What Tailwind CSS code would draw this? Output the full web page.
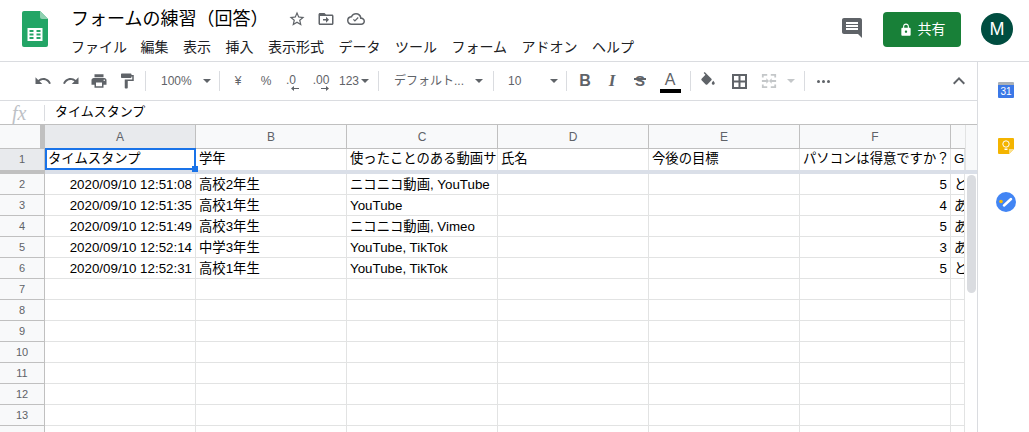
<!DOCTYPE html>
<html lang="ja">
<head>
    <meta charset="UTF-8">
    <title>フォームの練習（回答）</title>
    <script src="https://cdn.jsdelivr.net/npm/@tailwindcss/browser@4"></script>
</head>
<body class="h-screen overflow-hidden bg-white text-black font-['Liberation_Sans','Noto_Sans_CJK_JP',sans-serif]">

    <!-- Title bar -->
    <header class="flex h-[62px] border-b border-[#dadce0]">
        <svg class="ml-[22px] mt-[11px] w-[26px] h-[36px]" viewBox="0 0 26 36">
            <path d="M2 0h16l8 8v26a2 2 0 0 1-2 2H2a2 2 0 0 1-2-2V2a2 2 0 0 1 2-2z" fill="#23a566"/>
            <path d="M18 0l8 8h-6a2 2 0 0 1-2-2z" fill="#8ed1b1"/>
            <path d="M5.500 17h15v13h-15z M7.500 19v2h4v-2z M14.500 19v2h4v-2z M7.500 22.500v2h4v-2z M14.500 22.500v2h4v-2z M7.500 26v2h4v-2z M14.500 26v2h4v-2z" fill="#fff" fill-rule="evenodd"/>
        </svg>
        <div class="ml-[23px] flex flex-col">
            <div class="flex items-center h-[24px] mt-[7px]">
                <span class="text-[18px] leading-[24px] w-[217px] whitespace-nowrap">フォームの練習（回答）</span>
                <svg class="w-[18px] h-[18px]" viewBox="0 0 24 24" fill="#5f6368"><path d="M22 9.240l-7.190-.620L12 2 9.190 8.630 2 9.240l5.460 4.730L5.820 21 12 17.270 18.180 21l-1.630-7.030L22 9.240zM12 15.400l-3.760 2.270 1-4.280-3.320-2.880 4.380-.380L12 6.100l1.710 4.040 4.380.380-3.320 2.880 1 4.280L12 15.400z"/></svg>
                <svg class="ml-[11px] w-[18px] h-[18px]" viewBox="0 0 24 24" fill="#5f6368"><path d="M20 6h-8l-2-2H4c-1.100 0-2 .9-2 2v12c0 1.100.9 2 2 2h16c1.100 0 2-.9 2-2V8c0-1.100-.9-2-2-2zm0 12H4V8h16v10zm-8-1l4-4-4-4v3H8v2h4v3z"/></svg>
                <svg class="ml-[12px] w-[18px] h-[18px]" viewBox="0 0 24 24" fill="#5f6368"><path d="M19.350 10.040A7.490 7.490 0 0 0 12 4C9.110 4 6.600 5.640 5.350 8.040A5.994 5.994 0 0 0 0 14c0 3.310 2.690 6 6 6h13c2.760 0 5-2.240 5-5 0-2.640-2.050-4.780-4.650-4.960zM19 18H6c-2.210 0-4-1.790-4-4s1.790-4 4-4h.710C7.370 7.690 9.480 6 12 6c3.040 0 5.500 2.460 5.500 5.500v.5H19c1.660 0 3 1.340 3 3s-1.340 3-3 3zm-8.500-2.500L8 13l1.100-1.100 1.400 1.400 3.900-3.900 1.100 1.100-5 5z"/></svg>
            </div>
            <nav class="flex gap-[14.500px] mt-[4px] text-[14px] leading-[24px] text-[#202124] whitespace-nowrap">
                <span class="-mr-[1px]">ファイル</span><span>編集</span><span>表示</span><span>挿入</span><span>表示形式</span><span>データ</span><span>ツール</span><span>フォーム</span><span>アドオン</span><span>ヘルプ</span>
            </nav>
        </div>
        <div class="ml-auto flex items-start">
            <svg class="mt-[16px] w-[24px] h-[24px]" viewBox="0 0 24 24" fill="#5f6368"><path d="M21.990 4c0-1.100-.89-2-1.990-2H4c-1.100 0-2 .9-2 2v12c0 1.100.9 2 2 2h14l4 4-.01-18zM18 14H6v-2h12v2zm0-3H6V9h12v2zm0-3H6V6h12v2z"/></svg>
            <button class="ml-[19px] mt-[12px] flex items-center justify-center gap-[5px] w-[78px] h-[35px] rounded-[4px] bg-[#188038] text-white text-[14px]">
                <svg class="w-[14px] h-[14px]" viewBox="0 0 24 24" fill="#fff"><path d="M18 8h-1V6c0-2.760-2.240-5-5-5S7 3.240 7 6v2H6c-1.100 0-2 .9-2 2v10c0 1.100.9 2 2 2h12c1.100 0 2-.9 2-2V10c0-1.100-.9-2-2-2zm-6 9c-1.100 0-2-.9-2-2s.9-2 2-2 2 .9 2 2-.9 2-2 2zm3.100-9H8.900V6c0-1.710 1.390-3.100 3.100-3.100 1.710 0 3.100 1.390 3.100 3.100v2z"/></svg>
                共有
            </button>
            <div class="ml-[20px] mr-[16px] mt-[13px] w-[32px] h-[32px] rounded-full bg-[#004d40] text-white text-[18px] flex items-center justify-center">M</div>
        </div>
    </header>

    <div class="flex h-[370px]">
        <main class="w-[977px] flex flex-col border-r border-[#dadce0] box-content">

            <!-- Toolbar -->
            <div class="flex items-center h-[38px] pl-[29px] border-b border-[#dadce0] box-content text-[#5f6368] text-[12px] whitespace-nowrap">
                <span class="w-[28px] flex justify-center"><svg class="w-[18px] h-[18px]" viewBox="0 0 24 24" fill="#5f6368"><path d="M12.500 8c-2.650 0-5.050.99-6.900 2.600L2 7v9h9l-3.620-3.620c1.390-1.160 3.160-1.880 5.120-1.880 3.540 0 6.550 2.310 7.600 5.500l2.370-.78C21.080 11.030 17.150 8 12.500 8z"/></svg></span>
                <span class="w-[28px] flex justify-center"><svg class="w-[18px] h-[18px]" viewBox="0 0 24 24" fill="#5f6368"><path d="M18.400 10.600C16.550 8.990 14.150 8 11.500 8c-4.650 0-8.580 3.030-9.960 7.220L3.900 16c1.050-3.190 4.050-5.500 7.600-5.500 1.950 0 3.730.72 5.120 1.880L13 16h9V7l-3.600 3.600z"/></svg></span>
                <span class="w-[28px] flex justify-center"><svg class="w-[18px] h-[18px]" viewBox="0 0 24 24" fill="#5f6368"><path d="M19 8H5c-1.660 0-3 1.340-3 3v6h4v4h12v-4h4v-6c0-1.660-1.340-3-3-3zm-3 11H8v-5h8v5zm3-7c-.55 0-1-.45-1-1s.45-1 1-1 1 .45 1 1-.45 1-1 1zm-1-9H6v4h12V3z"/></svg></span>
                <span class="w-[28px] flex justify-center"><svg class="w-[18px] h-[18px]" viewBox="0 0 24 24" fill="#5f6368"><path d="M18 4V3c0-.55-.45-1-1-1H5c-.55 0-1 .45-1 1v4c0 .55.45 1 1 1h12c.55 0 1-.45 1-1V6h1v4H9v11c0 .55.45 1 1 1h2c.55 0 1-.45 1-1v-9h8V4h-3z"/></svg></span>
                <span class="ml-[4px] w-px h-[20px] bg-[#dadce0]"></span>
                <span class="w-[54px] pl-[15px]">100%</span>
                <span class="w-[14px] flex justify-center"><span class="border-x-[4px] border-t-[4px] border-x-transparent border-t-[#5f6368]"></span></span>
                <span class="ml-[5px] w-px h-[20px] bg-[#dadce0]"></span>
                <span class="w-[36px] text-center">¥</span>
                <span class="w-[20px] text-center">%</span>
                <span class="w-[30px] flex flex-col items-center leading-[12px] pt-[3px]">.0<svg class="ml-[8px] w-[8px] h-[5px]" viewBox="0 0 8 5" fill="#5f6368"><path d="M0 2.500L3 0v2h5v1H3v2z"/></svg></span>
                <span class="w-[30px] flex flex-col items-center leading-[12px] pt-[3px]">.00<svg class="ml-[8px] w-[8px] h-[5px]" viewBox="0 0 8 5" fill="#5f6368"><path d="M8 2.500L5 0v2H0v1h5v2z"/></svg></span>
                <span class="w-[25px] pl-[3px]">123</span>
                <span class="w-[8px] flex justify-center"><span class="border-x-[4px] border-t-[4px] border-x-transparent border-t-[#5f6368]"></span></span>
                <span class="ml-[9px] w-px h-[20px] bg-[#dadce0]"></span>
                <span class="w-[93px] pl-[15px]">デフォルト...</span>
                <span class="w-[14px] flex justify-center"><span class="border-x-[4px] border-t-[4px] border-x-transparent border-t-[#5f6368]"></span></span>
                <span class="ml-[7px] w-px h-[20px] bg-[#dadce0]"></span>
                <span class="w-[53px] pl-[14px]">10</span>
                <span class="w-[14px] flex justify-center"><span class="border-x-[4px] border-t-[4px] border-x-transparent border-t-[#5f6368]"></span></span>
                <span class="ml-[5px] w-px h-[20px] bg-[#dadce0]"></span>
                <span class="w-[36px] text-center text-[16px] font-bold">B</span>
                <span class="w-[18px] text-center text-[17px] font-bold italic font-['Liberation_Serif',serif]">I</span>
                <span class="relative w-[38px] text-center text-[15px] font-bold">S<span class="absolute left-[13px] top-[8px] w-[12px] h-[2px] bg-[#5f6368]"></span></span>
                <span class="w-[22px] flex flex-col items-center text-[16px] leading-[17px] pt-[2px]">A<span class="mt-[1px] w-[21px] h-[4px] bg-black"></span></span>
                <span class="ml-[9px] w-px h-[20px] bg-[#dadce0]"></span>
                <span class="w-[34px] flex justify-center"><svg class="w-[18px] h-[18px]" viewBox="0 0 24 24" fill="#5f6368"><path d="M16.560 8.940L7.620 0 6.210 1.410l2.380 2.380-5.150 5.150c-.59.59-.59 1.540 0 2.120l5.500 5.500c.29.29.68.44 1.060.44s.77-.15 1.060-.44l5.500-5.500c.59-.58.59-1.530 0-2.120zM19 11.500s-2 2.170-2 3.500c0 1.100.9 2 2 2s2-.9 2-2c0-1.330-2-3.500-2-3.500z"/></svg></span>
                <span class="w-[28px] flex justify-center"><svg class="w-[15px] h-[15px]" viewBox="0 0 15 15" fill="#5f6368"><path d="M0 0h15v15H0z M2 2v4.500h4.500V2z M8.500 2v4.500H13V2z M2 8.500V13h4.500V8.500z M8.500 8.500V13H13V8.500z" fill-rule="evenodd"/></svg></span>
                <span class="w-[32px] flex justify-center"><svg class="w-[16px] h-[16px]" viewBox="0 0 18 18" fill="#c4c7c9"><path d="M1 1h6v2H3v2H1z M11 1h6v4h-2V3h-4z M1 13h2v2h4v2H1z M15 13h2v4h-6v-2h4z M1 8h5V6l3 3-3 3v-2H1z M17 8h-5V6L9 9l3 3v-2h5z"/></svg></span>
                <span class="w-[12px] flex justify-center"><span class="border-x-[4px] border-t-[4px] border-x-transparent border-t-[#c4c7c9]"></span></span>
                <span class="ml-[7px] w-px h-[20px] bg-[#dadce0]"></span>
                <span class="w-[36px] flex justify-center gap-[2px]"><i class="w-[3px] h-[3px] rounded-full bg-[#5f6368]"></i><i class="w-[3px] h-[3px] rounded-full bg-[#5f6368]"></i><i class="w-[3px] h-[3px] rounded-full bg-[#5f6368]"></i></span>
                <span class="ml-auto mr-[4px] w-[28px] flex justify-center"><svg class="w-[24px] h-[24px]" viewBox="0 0 24 24" fill="#5f6368"><path d="M12 8l-6 6 1.410 1.410L12 10.830l4.590 4.580L18 14z"/></svg></span>
            </div>

            <!-- Formula bar -->
            <div class="flex items-center h-[23px] border-b border-[#c0c0c0] box-content">
                <span class="w-[44px] pl-[12px] font-['Liberation_Serif',serif] italic text-[20px] leading-[20px] text-[#bdc1c6]">fx</span>
                <span class="w-px h-[16px] bg-[#dadce0]"></span>
                <span class="ml-[10px] pb-[2px] text-[13px]">タイムスタンプ</span>
            </div>

            <!-- Sheet grid -->
            <div class="flex flex-1 min-h-0 overflow-hidden">
                <div class="relative w-[965px] text-[13.330px] whitespace-nowrap">
                    <div class="flex h-[24px] text-[12px] text-[#5f6368] bg-[#f8f9fa]">
                        <div class="relative w-[45px] border-r border-b border-[#c0c0c0]"><span class="absolute right-0 top-0 w-[4px] h-full bg-[#c0c0c0]"></span></div>
                        <div class="w-[151px] flex items-center justify-center border-r border-b border-[#c0c0c0] bg-[#e8eaed]">A</div>
                        <div class="w-[151px] flex items-center justify-center border-r border-b border-[#c0c0c0]">B</div>
                        <div class="w-[151px] flex items-center justify-center border-r border-b border-[#c0c0c0]">C</div>
                        <div class="w-[151px] flex items-center justify-center border-r border-b border-[#c0c0c0]">D</div>
                        <div class="w-[151px] flex items-center justify-center border-r border-b border-[#c0c0c0]">E</div>
                        <div class="w-[151px] flex items-center justify-center border-r border-b border-[#c0c0c0]">F</div>
                        <div class="w-[14px] border-b border-[#c0c0c0]"></div>
                    </div>
                    <div class="flex h-[21px]">
                        <div class="w-[45px] flex items-center justify-center border-r border-[#c0c0c0] bg-[#e8eaed] text-[11px] text-[#5f6368]">1</div>
                        <div class="grid grid-cols-[repeat(6,151px)_14px] *:overflow-hidden *:border-r *:border-[#e2e3e3] *:px-[3px] *:leading-[20px]">
                            <div>タイムスタンプ</div><div>学年</div><div>使ったことのある動画サ</div><div>氏名</div><div>今後の目標</div><div>パソコンは得意ですか？</div><div>G</div>
                        </div>
                    </div>
                    <div class="flex h-[4px]">
                        <div class="w-[45px] bg-[#c0c0c0]"></div>
                        <div class="flex-1 bg-[#dadfe8]"></div>
                    </div>
                    <div class="flex h-[21px]">
                        <div class="w-[45px] flex items-center justify-center border-r border-b border-[#c0c0c0] bg-[#f8f9fa] text-[11px] text-[#5f6368]">2</div>
                        <div class="grid grid-cols-[repeat(6,151px)_14px] *:overflow-hidden *:border-r *:border-b *:border-[#e2e3e3] *:px-[3px] *:pt-[1px] *:leading-[19px]">
                            <div class="text-right">2020/09/10 12:51:08</div><div>高校2年生</div><div>ニコニコ動画, YouTube</div><div></div><div></div><div class="text-right">5</div><div>と</div>
                        </div>
                    </div>
                    <div class="flex h-[21px]">
                        <div class="w-[45px] flex items-center justify-center border-r border-b border-[#c0c0c0] bg-[#f8f9fa] text-[11px] text-[#5f6368]">3</div>
                        <div class="grid grid-cols-[repeat(6,151px)_14px] *:overflow-hidden *:border-r *:border-b *:border-[#e2e3e3] *:px-[3px] *:pt-[1px] *:leading-[19px]">
                            <div class="text-right">2020/09/10 12:51:35</div><div>高校1年生</div><div>YouTube</div><div></div><div></div><div class="text-right">4</div><div>あ</div>
                        </div>
                    </div>
                    <div class="flex h-[21px]">
                        <div class="w-[45px] flex items-center justify-center border-r border-b border-[#c0c0c0] bg-[#f8f9fa] text-[11px] text-[#5f6368]">4</div>
                        <div class="grid grid-cols-[repeat(6,151px)_14px] *:overflow-hidden *:border-r *:border-b *:border-[#e2e3e3] *:px-[3px] *:pt-[1px] *:leading-[19px]">
                            <div class="text-right">2020/09/10 12:51:49</div><div>高校3年生</div><div>ニコニコ動画, Vimeo</div><div></div><div></div><div class="text-right">5</div><div>あ</div>
                        </div>
                    </div>
                    <div class="flex h-[21px]">
                        <div class="w-[45px] flex items-center justify-center border-r border-b border-[#c0c0c0] bg-[#f8f9fa] text-[11px] text-[#5f6368]">5</div>
                        <div class="grid grid-cols-[repeat(6,151px)_14px] *:overflow-hidden *:border-r *:border-b *:border-[#e2e3e3] *:px-[3px] *:pt-[1px] *:leading-[19px]">
                            <div class="text-right">2020/09/10 12:52:14</div><div>中学3年生</div><div>YouTube, TikTok</div><div></div><div></div><div class="text-right">3</div><div>あ</div>
                        </div>
                    </div>
                    <div class="flex h-[21px]">
                        <div class="w-[45px] flex items-center justify-center border-r border-b border-[#c0c0c0] bg-[#f8f9fa] text-[11px] text-[#5f6368]">6</div>
                        <div class="grid grid-cols-[repeat(6,151px)_14px] *:overflow-hidden *:border-r *:border-b *:border-[#e2e3e3] *:px-[3px] *:pt-[1px] *:leading-[19px]">
                            <div class="text-right">2020/09/10 12:52:31</div><div>高校1年生</div><div>YouTube, TikTok</div><div></div><div></div><div class="text-right">5</div><div>と</div>
                        </div>
                    </div>
                    <div class="flex h-[21px]"><div class="w-[45px] flex items-center justify-center border-r border-b border-[#c0c0c0] bg-[#f8f9fa] text-[11px] text-[#5f6368]">7</div><div class="grid grid-cols-[repeat(6,151px)_14px] *:border-r *:border-b *:border-[#e2e3e3]"><div></div><div></div><div></div><div></div><div></div><div></div><div></div></div></div>
                    <div class="flex h-[21px]"><div class="w-[45px] flex items-center justify-center border-r border-b border-[#c0c0c0] bg-[#f8f9fa] text-[11px] text-[#5f6368]">8</div><div class="grid grid-cols-[repeat(6,151px)_14px] *:border-r *:border-b *:border-[#e2e3e3]"><div></div><div></div><div></div><div></div><div></div><div></div><div></div></div></div>
                    <div class="flex h-[21px]"><div class="w-[45px] flex items-center justify-center border-r border-b border-[#c0c0c0] bg-[#f8f9fa] text-[11px] text-[#5f6368]">9</div><div class="grid grid-cols-[repeat(6,151px)_14px] *:border-r *:border-b *:border-[#e2e3e3]"><div></div><div></div><div></div><div></div><div></div><div></div><div></div></div></div>
                    <div class="flex h-[21px]"><div class="w-[45px] flex items-center justify-center border-r border-b border-[#c0c0c0] bg-[#f8f9fa] text-[11px] text-[#5f6368]">10</div><div class="grid grid-cols-[repeat(6,151px)_14px] *:border-r *:border-b *:border-[#e2e3e3]"><div></div><div></div><div></div><div></div><div></div><div></div><div></div></div></div>
                    <div class="flex h-[21px]"><div class="w-[45px] flex items-center justify-center border-r border-b border-[#c0c0c0] bg-[#f8f9fa] text-[11px] text-[#5f6368]">11</div><div class="grid grid-cols-[repeat(6,151px)_14px] *:border-r *:border-b *:border-[#e2e3e3]"><div></div><div></div><div></div><div></div><div></div><div></div><div></div></div></div>
                    <div class="flex h-[21px]"><div class="w-[45px] flex items-center justify-center border-r border-b border-[#c0c0c0] bg-[#f8f9fa] text-[11px] text-[#5f6368]">12</div><div class="grid grid-cols-[repeat(6,151px)_14px] *:border-r *:border-b *:border-[#e2e3e3]"><div></div><div></div><div></div><div></div><div></div><div></div><div></div></div></div>
                    <div class="flex h-[21px]"><div class="w-[45px] flex items-center justify-center border-r border-b border-[#c0c0c0] bg-[#f8f9fa] text-[11px] text-[#5f6368]">13</div><div class="grid grid-cols-[repeat(6,151px)_14px] *:border-r *:border-b *:border-[#e2e3e3]"><div></div><div></div><div></div><div></div><div></div><div></div><div></div></div></div>
                    <div class="flex h-[21px]"><div class="w-[45px] flex items-center justify-center border-r border-b border-[#c0c0c0] bg-[#f8f9fa] text-[11px] text-[#5f6368]">14</div><div class="grid grid-cols-[repeat(6,151px)_14px] *:border-r *:border-b *:border-[#e2e3e3]"><div></div><div></div><div></div><div></div><div></div><div></div><div></div></div></div>

                    <!-- Selected cell A1 -->
                    <div class="absolute left-[45px] top-[23px] w-[151px] h-[22px] border-2 border-[#1a73e8]"></div>
                    <div class="absolute left-[192px] top-[41px] w-[6px] h-[6px] bg-[#1a73e8]"></div>
                </div>

                <!-- Scroll gutter -->
                <div class="w-[12px] flex flex-col bg-white">
                    <div class="h-[45px] bg-[#f8f9fa] border-l border-[#e2e3e3]"></div>
                    <div class="h-[4px] bg-[#dadfe8]"></div>
                    <div class="mt-[1px] ml-[2px] w-[9px] h-[118px] rounded-full bg-[#dadce0]"></div>
                </div>
            </div>
        </main>

        <!-- Side panel -->
        <aside class="flex-1 flex flex-col items-center pl-[5px]">
            <div class="mt-[20px] w-[16px] h-[16px] flex flex-col rounded-[1px] overflow-hidden">
                <div class="h-[3px] bg-[#aab0b6]"></div>
                <div class="flex-1 bg-[#3b78e7] text-white text-[10px] leading-[13px] text-center">31</div>
            </div>
            <svg class="mt-[40px] w-[16px] h-[16px]" viewBox="0 0 16 16"><path d="M1 0h14a1 1 0 0 1 1 1v10l-5 5H1a1 1 0 0 1-1-1V1a1 1 0 0 1 1-1z" fill="#f4b400"/><path d="M16 11l-5 5v-5z" fill="#fbe08a"/><circle cx="8" cy="6" r="3.200" fill="none" stroke="#fff"/><path d="M6.500 10.500h3v1.500h-3z" fill="#fff"/></svg>
            <svg class="mt-[38px] w-[20px] h-[20px]" viewBox="0 0 20 20"><circle cx="10" cy="10" r="10" fill="#4285f4"/><path d="M8 13.500l7-6.500" stroke="#fff" stroke-width="2.500" stroke-linecap="round"/><circle cx="5" cy="9.500" r="1.800" fill="#fbbc04"/></svg>
        </aside>
    </div>
</body>
</html>
